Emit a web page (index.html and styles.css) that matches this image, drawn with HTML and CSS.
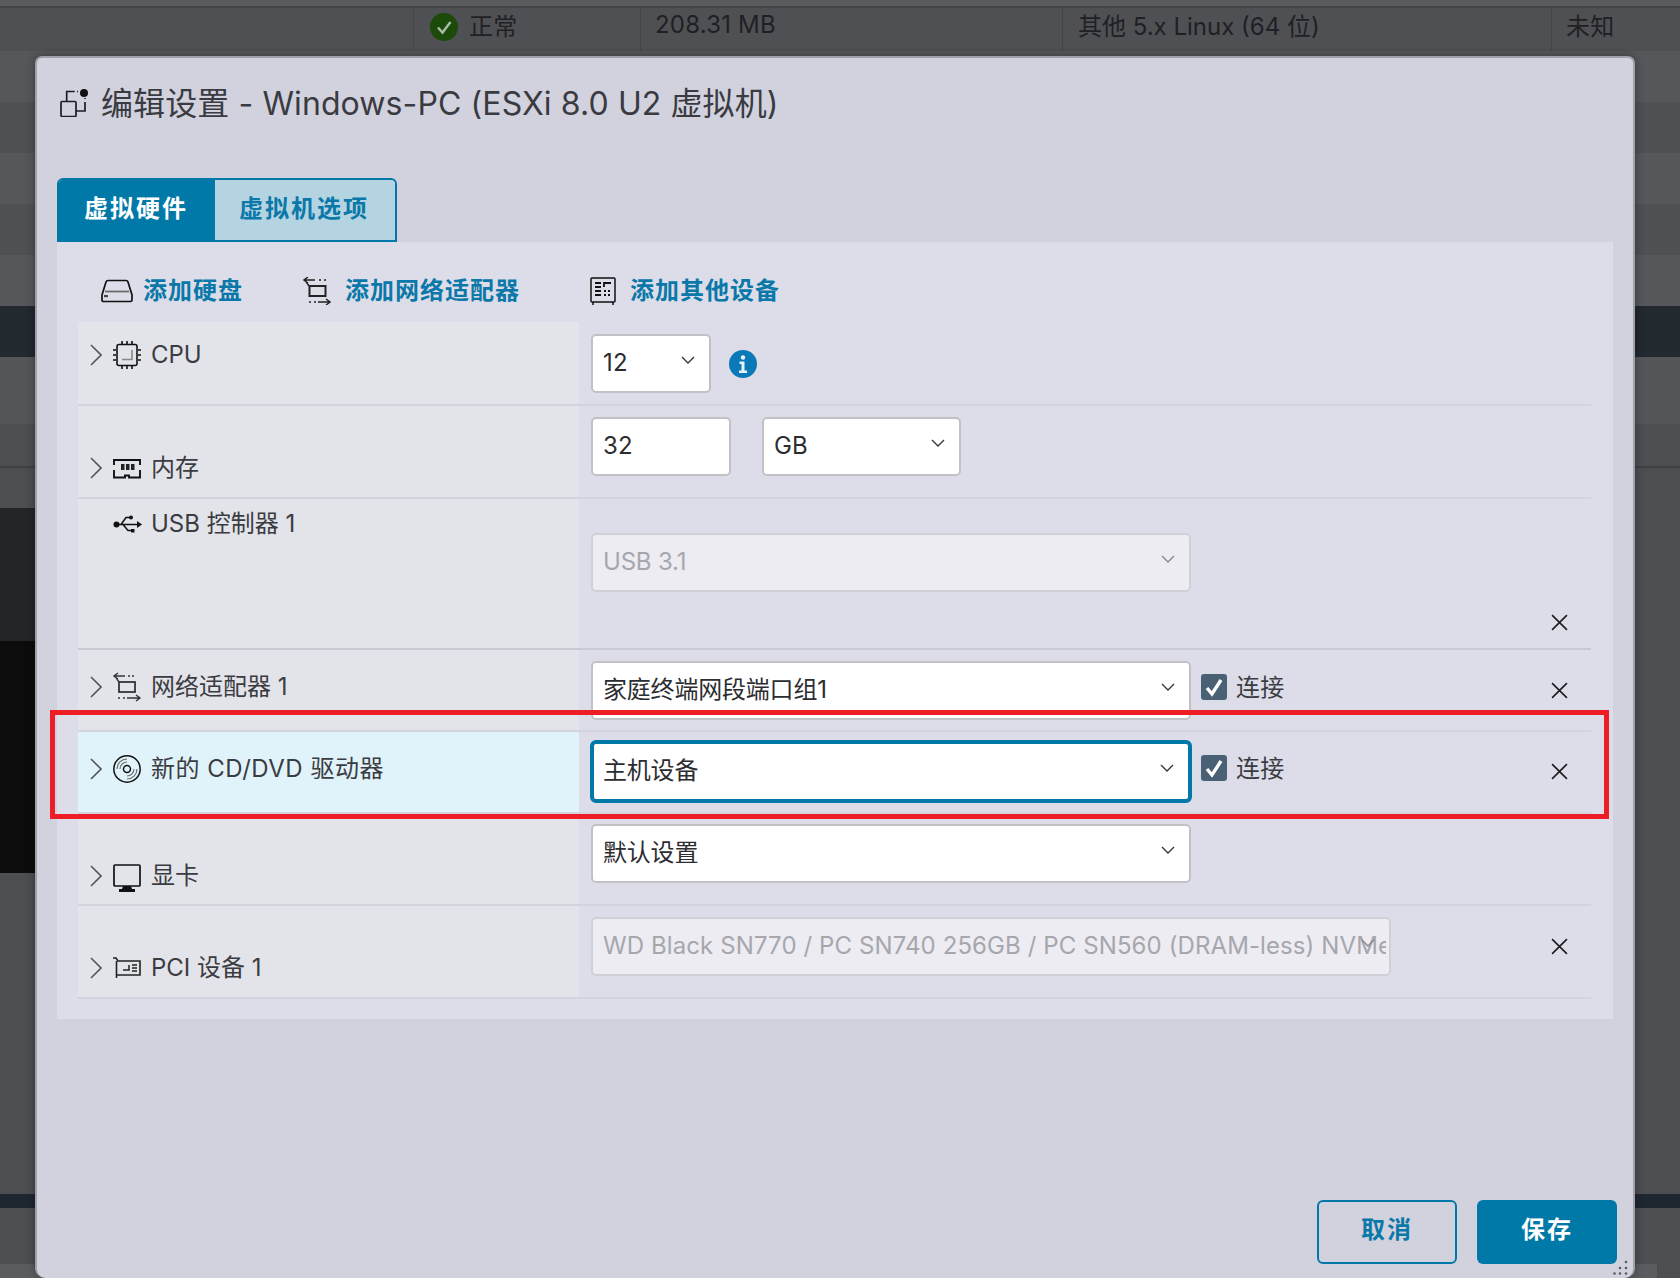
FILE: index.html
```html
<!DOCTYPE html>
<html lang="zh-CN">
<head>
    <meta charset="UTF-8">
    <meta name="viewport" content="width=device-width, initial-scale=1.0">
    <title>编辑设置 - Windows-PC</title>
    <link rel="stylesheet" href="styles.css">
</head>
<body>
    <!-- page behind the dialog -->
    <div class="backdrop">
        <div class="bg-line"></div>
        <div class="bg-row">
            <div class="bg-cell bg-first"></div>
            <div class="bg-cell bg-status">
                <svg class="status-icon" viewBox="0 0 28 28"><circle cx="14" cy="14" r="14" fill="#1c4a0b"/><path d="M8 14.5l4.5 5L20.5 9" fill="none" stroke="#a9bda6" stroke-width="2.4"/></svg>
                <span>正常</span>
            </div>
            <div class="bg-cell bg-size">208.31 MB</div>
            <div class="bg-cell bg-os">其他 5.x Linux (64 位)</div>
            <div class="bg-cell bg-last">未知</div>
        </div>
        <div class="bg-stripe light"></div>
        <div class="bg-stripe dark"></div>
        <div class="bg-stripe light"></div>
        <div class="bg-stripe dark"></div>
        <div class="bg-stripe light"></div>
        <div class="bg-header"></div>
        <div class="bg-toolbar"></div>
        <div class="bg-subbar"></div>
        <div class="bg-main">
            <div class="bg-side">
                <div class="bg-side-gap"></div>
                <div class="bg-side-a"></div>
                <div class="bg-side-b"></div>
            </div>
        </div>
        <div class="bg-foot-dark"></div>
        <div class="bg-foot"></div>
        <div class="bg-foot-cols"></div>
    </div>

    <div class="modal">
        <div class="modal-head">
            <svg class="head-icon" viewBox="0 0 28 28" fill="none" stroke="#1d1d20" stroke-width="1.7">
                <rect x="1" y="12.5" width="15" height="15" rx="1"/>
                <path d="M6.7 12V2.500h8M17 2.500h1M16 22h9v-9M25 10V9"/>
                <circle cx="24" cy="4" r="4" fill="#111" stroke="none"/>
            </svg>
            <h1>编辑设置 - Windows-PC (ESXi 8.0 U2 虚拟机)</h1>
        </div>

        <div class="tabs">
            <div class="tab active"><span>虚拟硬件</span></div>
            <div class="tab"><span>虚拟机选项</span></div>
        </div>

        <div class="panel">
            <div class="toolbar">
                <a class="tool tool-disk">
                    <svg class="tool-icon" viewBox="0 0 32 24" fill="none" stroke="#111" stroke-width="1.7">
                        <path d="M7 1.5h18c1 0 1.7.6 2 1.6L31 16v5c0 1-.6 1.5-1.5 1.5h-27C1.600 22.500 1 22 1 21v-5L5 3.100C5.300 2.100 6 1.500 7 1.500z"/>
                        <path d="M4 12.500h24" stroke="#666"/>
                        <rect x="3" y="16" width="4" height="2.200" fill="#444" stroke="none"/>
                    </svg>
                    <span>添加硬盘</span>
                </a>
                <a class="tool tool-net">
                    <svg class="tool-icon" viewBox="0 0 32 28" fill="none" stroke="#222" stroke-width="1.500">
                        <path d="M1 3h11M5 0L1 3l4 3M16 3h2M21 3h2M2 3l4 6"/>
                        <rect x="6.500" y="9" width="16" height="10" stroke-width="2"/>
                        <path d="M6 25h2M11 25h2M15 25h12M23 22l4 3-4 3"/>
                    </svg>
                    <span>添加网络适配器</span>
                </a>
                <a class="tool tool-other">
                    <svg class="tool-icon" viewBox="0 0 30 28" fill="none" stroke="#111" stroke-width="1.500">
                        <rect x="1" y="1" width="24" height="24" rx="1"/>
                        <path d="M3 25v3M23 25v3"/>
                        <path d="M5 6h6M5 10h6M5 14h6M5 18h6M14 10V6h7" stroke-width="1.800"/>
                        <path d="M14 14h2M18 14h3M14 18h2M18 18h3" stroke-dasharray="2 1.500" stroke-width="1.800"/>
                    </svg>
                    <span>添加其他设备</span>
                </a>
            </div>

            <div class="hw-table">
                <div class="hw-row row-cpu">
                    <div class="hw-label">
                        <svg class="chev" viewBox="0 0 12 22"><path d="M1 1l10 10L1 21"/></svg>
                        <svg class="hw-icon" viewBox="0 0 28 28" fill="none" stroke="#111" stroke-width="1.600">
                            <rect x="4" y="3.500" width="20" height="21" rx="2"/>
                            <path d="M9 0v3M14 0v3M19 0v3M9 25v3M14 25v3M19 25v3M0 9h3M0 14h3M0 19h3M25 9h3M25 14h3M25 19h3"/>
                            <path d="M9 18.500h10V9" stroke="#888"/>
                        </svg>
                        <span>CPU</span>
                    </div>
                    <div class="hw-controls">
                        <div class="select select-cpu"><span>12</span><svg class="caret" viewBox="0 0 14 8"><path d="M1 1l6 6 6-6"/></svg></div>
                        <svg class="info" viewBox="0 0 28 28">
                            <circle cx="14" cy="14" r="14" fill="#0a79b8"/>
                            <circle cx="14" cy="7.500" r="2.200" fill="#e8f2f7"/>
                            <path d="M10.500 11.500h5v9h2.500v2.500h-8v-2.500h2.500v-6.500h-2z" fill="#e8f2f7"/>
                        </svg>
                    </div>
                </div>

                <div class="hw-row row-mem">
                    <div class="hw-label">
                        <svg class="chev" viewBox="0 0 12 22"><path d="M1 1l10 10L1 21"/></svg>
                        <svg class="hw-icon" viewBox="0 0 28 28" fill="none" stroke="#111" stroke-width="1.900">
                            <path d="M1 11V6h26v5M1 16v7.500h11v-2h4v2h11V16"/>
                            <path d="M8 10h3.500v6H8zM13 10h3.500v6H13zM18 10h3.500v6H18z" fill="#222" stroke="none"/>
                        </svg>
                        <span>内存</span>
                    </div>
                    <div class="hw-controls">
                        <div class="select input-mem"><span>32</span></div>
                        <div class="select select-unit"><span>GB</span><svg class="caret" viewBox="0 0 14 8"><path d="M1 1l6 6 6-6"/></svg></div>
                    </div>
                </div>

                <div class="hw-row row-usb">
                    <div class="hw-label">
                        <span class="chev-space"></span>
                        <svg class="hw-icon" viewBox="0 0 28 28" fill="#111" stroke="#111" stroke-width="1.500">
                            <path d="M2 14.500h24M8 14.500l5-7h4M10 14.500l5 6h4" fill="none"/>
                            <circle cx="3.500" cy="14.500" r="3" stroke="none"/>
                            <circle cx="18" cy="7.500" r="2" stroke="none"/>
                            <rect x="18" y="19" width="3.500" height="3.500" stroke="none"/>
                            <path d="M24 11l5 3.500-5 3.500z" stroke="none"/>
                        </svg>
                        <span>USB 控制器 1</span>
                    </div>
                    <div class="hw-controls">
                        <div class="select select-wide disabled"><span>USB 3.1</span><svg class="caret" viewBox="0 0 14 8"><path d="M1 1l6 6 6-6"/></svg></div>
                        <svg class="remove remove-low" viewBox="0 0 16 16"><path d="M1 1l14 14M15 1L1 15"/></svg>
                    </div>
                </div>

                <div class="hw-row row-net">
                    <div class="hw-label">
                        <svg class="chev" viewBox="0 0 12 22"><path d="M1 1l10 10L1 21"/></svg>
                        <svg class="hw-icon" viewBox="0 0 28 28" fill="none" stroke="#333" stroke-width="1.400">
                            <path d="M1 3h11M5 0L1 3l4 3M15 3h2M19 3h2M2 3l4 6"/>
                            <rect x="6" y="9" width="16" height="10" stroke-width="1.800"/>
                            <path d="M5 25h2M10 25h2M14 25h13M23 22l4 3-4 3"/>
                        </svg>
                        <span>网络适配器 1</span>
                    </div>
                    <div class="hw-controls">
                        <div class="select select-wide"><span>家庭终端网段端口组1</span><svg class="caret" viewBox="0 0 14 8"><path d="M1 1l6 6 6-6"/></svg></div>
                        <label class="connect">
                            <svg class="check" viewBox="0 0 26 26"><rect width="26" height="26" rx="3" fill="#4a6074"/><path d="M6 14l5 6 9-14" fill="none" stroke="#fff" stroke-width="3.400"/></svg>
                            <span>连接</span>
                        </label>
                        <svg class="remove" viewBox="0 0 16 16"><path d="M1 1l14 14M15 1L1 15"/></svg>
                    </div>
                </div>

                <div class="hw-row row-cd">
                    <div class="hw-label">
                        <svg class="chev" viewBox="0 0 12 22"><path d="M1 1l10 10L1 21"/></svg>
                        <svg class="hw-icon" viewBox="0 0 28 28" fill="none" stroke="#111" stroke-width="1.500">
                            <circle cx="14" cy="14" r="13.200"/>
                            <circle cx="14" cy="14" r="3.500"/>
                            <path d="M14 7a7 7 0 0 0-7 7M14 4a10 10 0 0 0-10 10M14 21a7 7 0 0 0 7-7M14 24a10 10 0 0 0 10-10" stroke="#666" stroke-width="1.100"/>
                        </svg>
                        <span>新的 CD/DVD 驱动器</span>
                    </div>
                    <div class="hw-controls">
                        <div class="select select-focus"><span>主机设备</span><svg class="caret" viewBox="0 0 14 8"><path d="M1 1l6 6 6-6"/></svg></div>
                        <label class="connect">
                            <svg class="check" viewBox="0 0 26 26"><rect width="26" height="26" rx="3" fill="#4a6074"/><path d="M6 14l5 6 9-14" fill="none" stroke="#fff" stroke-width="3.400"/></svg>
                            <span>连接</span>
                        </label>
                        <svg class="remove" viewBox="0 0 16 16"><path d="M1 1l14 14M15 1L1 15"/></svg>
                    </div>
                </div>

                <div class="hw-row row-gpu">
                    <div class="hw-label">
                        <svg class="chev" viewBox="0 0 12 22"><path d="M1 1l10 10L1 21"/></svg>
                        <svg class="hw-icon" viewBox="0 0 28 28" fill="none" stroke="#111" stroke-width="1.700">
                            <rect x="1" y="3" width="26" height="21" rx="1"/>
                            <path d="M10 24h8l1 3h3v3H6v-3h3z" fill="#111" stroke="none"/>
                        </svg>
                        <span>显卡</span>
                    </div>
                    <div class="hw-controls">
                        <div class="select select-wide"><span>默认设置</span><svg class="caret" viewBox="0 0 14 8"><path d="M1 1l6 6 6-6"/></svg></div>
                    </div>
                </div>

                <div class="hw-row row-pci">
                    <div class="hw-label">
                        <svg class="chev" viewBox="0 0 12 22"><path d="M1 1l10 10L1 21"/></svg>
                        <svg class="hw-icon" viewBox="0 0 28 28" fill="none" stroke="#222" stroke-width="1.600">
                            <path d="M0 4h3l2 3h22v14H3.500M3.500 7v17"/>
                            <path d="M10 16h6v-5M19 11h5M19 14h5M19 17h5" stroke-width="1.500"/>
                        </svg>
                        <span>PCI 设备 1</span>
                    </div>
                    <div class="hw-controls">
                        <div class="select select-pci disabled"><span>WD Black SN770 / PC SN740 256GB / PC SN560 (DRAM-less) NVMe</span><svg class="caret" viewBox="0 0 14 8"><path d="M1 1l6 6 6-6"/></svg></div>
                        <svg class="remove" viewBox="0 0 16 16"><path d="M1 1l14 14M15 1L1 15"/></svg>
                    </div>
                </div>
            </div>
        </div>

        <div class="modal-foot">
            <button class="btn btn-outline"><span>取消</span></button>
            <button class="btn btn-primary"><span>保存</span></button>
        </div>

        <svg class="resize" viewBox="0 0 16 16" fill="#5a5b66">
            <circle cx="13" cy="2" r="1.300"/>
            <circle cx="7" cy="8" r="1.300"/><circle cx="13" cy="8" r="1.300"/>
            <circle cx="1.500" cy="13.500" r="1.300"/><circle cx="7" cy="13.500" r="1.300"/><circle cx="13" cy="13.500" r="1.300"/>
        </svg>
    </div>

    <!-- red annotation box drawn on the screenshot -->
    <div class="callout"></div>
</body>
</html>
```

FILE: styles.css
```css
* { box-sizing: border-box; }
html, body { margin: 0; height: 1278px; overflow: hidden; }
body { position: relative; width: 1680px; background: #4d4e52; font-family: Inter, "Noto Sans CJK SC", sans-serif; font-size: 24px; letter-spacing: 0.2px; color: #3b3c42; }

/* backdrop */
.backdrop { display: flex; flex-direction: column; height: 1278px; color: #1f2024; }
.bg-line { height: 8px; background: #5a5b5e; border-bottom: 2px solid #434448; }
.bg-row { display: grid; grid-template-columns: 413px 227px 422px 489px 1fr; height: 43px; background: #4f5054; }
.bg-cell { display: flex; align-items: center; border-left: 1px solid #444549; height: 48px; padding-bottom: 16px; }
.bg-first { border-left: none; }
.bg-status { padding-left: 16px; gap: 11px; }
.status-icon { width: 28px; height: 28px; margin-top: 6px; }
.bg-size { padding-left: 14px; }
.bg-os { padding-left: 15px; letter-spacing: 0; }
.bg-last { padding-left: 14px; }
.bg-stripe { height: 51px; }
.bg-stripe.light { background: #56575a; }
.bg-stripe.dark { background: #4f5053; }
.bg-header { height: 51px; background: #22292f; }
.bg-toolbar { height: 67px; background: #555659; }
.bg-subbar { height: 44px; background: #4e4f52; border-bottom: 2px solid #3f4043; }
.bg-main { height: 726px; background: #4d4e52; }
.bg-side { width: 35px; }
.bg-side-gap { height: 40px; }
.bg-side-a { height: 133px; background: #242526; }
.bg-side-b { height: 232px; background: #0c0c0c; }
.bg-foot-dark { height: 14px; background: #1e2730; }
.bg-foot { height: 56px; background: #4e4f52; }
.bg-foot-cols { height: 14px; background: #5b5c5f; border-right: 1px solid #4a4b4e; margin-right: 22px; }

/* dialog */
.modal { position: absolute; left: 35px; top: 56px; width: 1600px; height: 1222px; display: flex; flex-direction: column; background: #d1d2de; border: 2px solid #a0a1ab; border-bottom: none; border-radius: 7px 7px 10px 10px; padding: 0 20px 14px 20px; box-shadow: 0 0 10px rgba(0,0,0,0.35); }
.modal-head { display: flex; align-items: center; gap: 13px; height: 120px; padding: 0 0 34px 3px; flex: none; }
.head-icon { width: 28px; height: 28px; margin-top: 4px; }
h1 { margin: 0; font-size: 32px; font-weight: 400; letter-spacing: 0.1px; color: #3a3b41; }

.tabs { display: flex; width: 340px; height: 64px; flex: none; border: 2px solid #0079a8; border-radius: 6px 6px 0 0; }
.tab { display: flex; align-items: center; justify-content: center; flex: 1; padding-right: 2px; background: #b5d4e2; color: #0a78a8; font-weight: 700; letter-spacing: 2px; border-radius: 0 5px 0 0; }
.tab span { padding-bottom: 8px; }
.tab.active { flex: none; width: 156px; background: #0079a8; color: #fff; border-radius: 4px 0 0 0; }

.panel { background: #dcdde8; padding: 0 22px 20px 21px; height: 777px; flex: none; }
.toolbar { display: flex; align-items: center; height: 80px; padding: 18px 0 0 23px; }
.tool { display: flex; align-items: center; gap: 10px; color: #0a78a8; font-weight: 600; letter-spacing: 1px; }
.tool span { padding-bottom: 6px; }
.tool-disk { margin-right: 60px; }
.tool-net { margin-right: 70px; }
.tool-disk .tool-icon { width: 32px; height: 24px; }
.tool-net .tool-icon { width: 32px; height: 28px; }
.tool-other .tool-icon { width: 30px; height: 28px; }

.hw-row { display: grid; grid-template-columns: 501px 1fr; border-bottom: 2px solid #d2d3dc; }
.hw-label { display: flex; align-items: flex-start; background: #e3e4ea; padding-left: 12px; letter-spacing: 0; }
.hw-label span { line-height: 28px; }
.chev { width: 12px; height: 22px; margin: 3px 11px 0 0; fill: none; stroke: #55565c; stroke-width: 1.600; }
.chev-space { width: 23px; flex: none; }
.hw-icon { width: 28px; height: 28px; margin-right: 10px; flex: none; overflow: visible; }
.hw-controls { display: flex; align-items: center; padding-left: 12px; padding-right: 23px; align-self: start; width: 100%; }

/* row heights and where the content sits in each */
.row-cpu { height: 84px; }
.row-cpu .hw-label { padding-top: 19px; }
.row-cpu .hw-controls { padding-top: 12px; }
.row-mem { height: 93px; }
.row-mem .hw-label { padding-top: 48px; }
.row-mem .hw-controls { padding-top: 11px; }
.row-usb { height: 151px; border-bottom-color: #c8c9d2; }
.row-usb .hw-label { padding-top: 11px; }
.row-usb .hw-controls { padding-top: 34px; align-items: flex-start; }
.row-net { height: 82px; }
.row-net .hw-label { padding-top: 23px; }
.row-net .hw-controls { padding-top: 11px; }
.row-cd { height: 82px; }
.row-cd .hw-label { padding-top: 23px; background: #e0f3fb; letter-spacing: 0.5px; }
.row-cd .hw-controls { padding-top: 8px; }
.row-gpu { height: 92px; }
.row-gpu .hw-label { padding-top: 48px; }
.row-gpu .hw-controls { padding-top: 10px; }
.row-pci { height: 93px; }
.row-pci .hw-label { padding-top: 48px; }
.row-pci .hw-controls { padding-top: 11px; }

.select { position: relative; display: flex; align-items: center; height: 59px; padding: 0 10px; background: #fff; border: 2px solid #c2c2c6; border-radius: 5px; color: #2c2d31; flex: none; }
.select span { line-height: 30px; padding-bottom: 1px; white-space: nowrap; overflow: hidden; }
.caret { position: absolute; right: 14px; top: 20px; width: 14px; height: 8px; fill: none; stroke: #333; stroke-width: 1.300; }
.select-cpu { width: 120px; }
.input-mem { width: 140px; }
.select-unit { width: 199px; margin-left: 31px; }
.select-wide { width: 600px; letter-spacing: -0.2px; }
.select-focus { width: 602px; height: 63px; margin: 0 -1px 0 -1px; padding-left: 9px; border: 4px solid #0079a8; border-radius: 6px; letter-spacing: -0.2px; }
.select-pci { width: 800px; padding-right: 3px; letter-spacing: 0.1px; }
.select.disabled { background: #edecf2; border-color: #d0d1d8; color: #a6a7ad; }
.select.disabled .caret { stroke: #85868c; }
.info { width: 28px; height: 28px; margin: 0 0 0 18px; }

.connect { display: flex; align-items: center; gap: 9px; margin: -8px 0 0 10px; }
.connect span { padding-bottom: 3px; }
.check { width: 26px; height: 26px; }
.remove { width: 17px; height: 17px; margin-left: auto; fill: none; stroke: #1c1c1e; stroke-width: 1.500; flex: none; }
.remove-low { margin-top: 81px; }

.modal-foot { display: flex; justify-content: flex-end; gap: 20px; margin: auto -4px 0 0; }
.btn { width: 140px; height: 64px; border-radius: 6px; font: inherit; font-weight: 700; letter-spacing: 2px; cursor: pointer; }
.btn span { display: block; padding-bottom: 9px; }
.btn-outline { background: transparent; color: #0a78a8; border: 2px solid #0079a8; }
.btn-primary { background: #0079a8; color: #fff; border: none; }
.resize { position: absolute; right: 4px; bottom: 2px; width: 16px; height: 16px; }

.callout { position: absolute; left: 50px; top: 710px; width: 1559px; height: 109px; border: 5px solid #ee1c25; pointer-events: none; }
```
